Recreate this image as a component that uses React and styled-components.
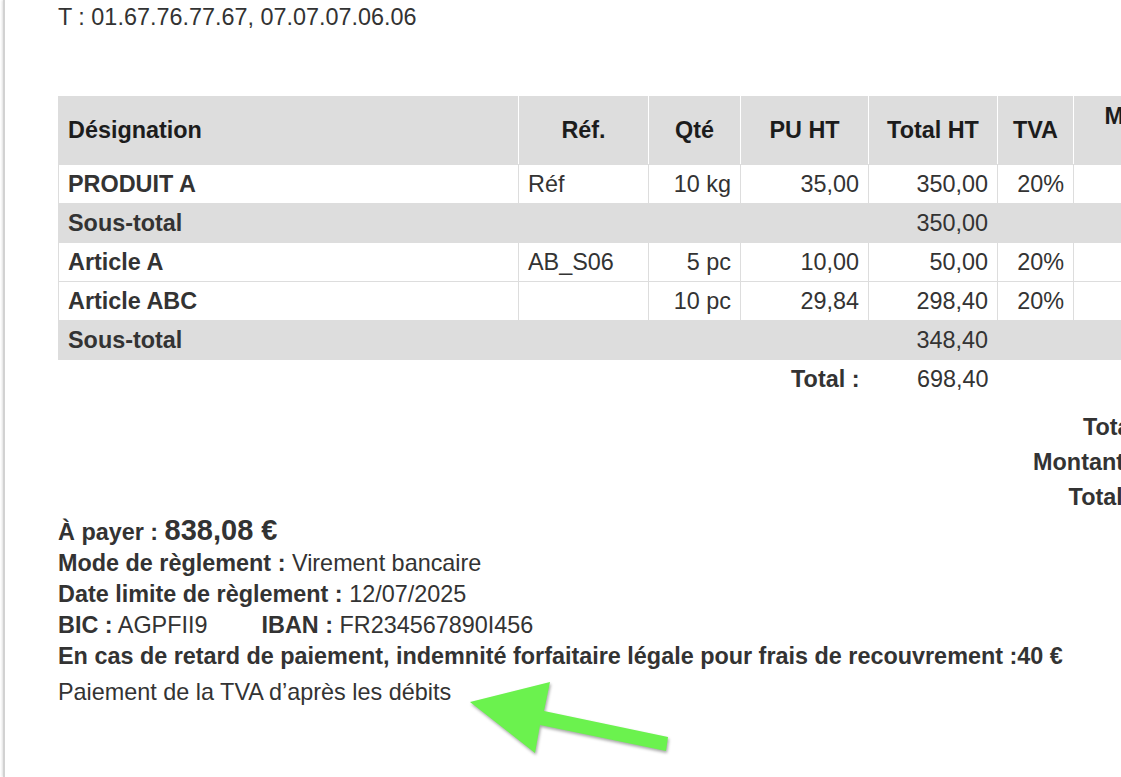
import React from 'react';
import styled, { createGlobalStyle } from 'styled-components';

const GlobalStyle = createGlobalStyle`
  html, body {
    margin: 0;
    padding: 0;
    background: #fff;
    overflow: hidden;
  }
  body {
    font-family: "Liberation Sans", Arial, Helvetica, sans-serif;
    font-size: 23.4px;
    color: #333;
  }
`;

const Viewport = styled.div`
  position: relative;
  width: 100vw;
  height: 100vh;
  overflow: hidden;
`;

const Page = styled.div`
  display: flow-root;
  margin-left: 3px;
  width: 1400px;
  min-height: 100vh;
  padding-left: 53px;
  border-left: 2px solid #d2d2d2;
  box-shadow: -1px 0 2px rgba(0, 0, 0, 0.12);
  box-sizing: border-box;
`;

const Contact = styled.div`
  margin-top: -29px;
  line-height: 31px;
`;

const Table = styled.table`
  margin-top: 63px;
  border-collapse: collapse;
  table-layout: fixed;
  width: 1168px;
  line-height: 28px;
`;

const Th = styled.th`
  box-sizing: border-box;
  width: ${({ $w }) => $w}px;
  padding: 6px 9px;
  background: #ddd;
  color: #1c1c1c;
  font-weight: bold;
  text-align: ${({ $align }) => $align || 'center'};
  vertical-align: middle;
  white-space: nowrap;
  border-left: 1px solid #fff;
  border-right: 1px solid #fff;
  border-bottom: 1px solid #ddd;
  &:first-child {
    border-left: 1px solid #ddd;
  }
`;

const Td = styled.td`
  padding: 5px 9px;
  border: 1px solid #ddd;
  text-align: ${({ $align }) => $align || 'left'};
  font-weight: ${({ $bold }) => ($bold ? 'bold' : 'normal')};
  white-space: nowrap;
  overflow: hidden;
`;

const SubRow = styled.tr`
  background: #ddd;
  td {
    border-color: #ddd;
  }
`;

const TotalCell = styled.td`
  padding: 5px 9px;
  text-align: right;
  font-weight: ${({ $bold }) => ($bold ? 'bold' : 'normal')};
`;

const Totals = styled.div`
  display: grid;
  grid-template-columns: 200px 169px;
  width: 369px;
  margin: 12px 39px 0 auto;
  line-height: 29px;
`;

const TotalLabel = styled.div`
  padding: 3px 6px 3px 0;
  text-align: right;
  font-weight: bold;
  white-space: nowrap;
`;

const TotalValue = styled.div`
  padding: 3px 0 3px 10px;
  text-align: right;
`;

const Payment = styled.div`
  line-height: 31px;
`;

const Line = styled.div`
  white-space: nowrap;
`;

const Label = styled.b`
  font-weight: bold;
`;

const Amount = styled.span`
  font-size: 29px;
  font-weight: bold;
`;

const Iban = styled.span`
  margin-left: 54px;
`;

const Note = styled.p`
  margin: 5px 0 0;
  line-height: 31px;
`;

const Arrow = styled.svg`
  position: absolute;
  left: 460px;
  top: 670px;
  width: 220px;
  height: 100px;
  overflow: visible;
  filter: drop-shadow(1px 2px 1.5px rgba(0, 0, 0, 0.35));
`;

const columns = [
  { label: 'Désignation', w: 460, align: 'left' },
  { label: 'Réf.', w: 130 },
  { label: 'Qté', w: 92 },
  { label: 'PU HT', w: 128 },
  { label: 'Total HT', w: 129 },
  { label: 'TVA', w: 76 },
  { label: <>Montant<br />TTC</>, w: 153 },
];

const rows = [
  { name: 'PRODUIT A', ref: 'Réf', qty: '10 kg', pu: '35,00', total: '350,00', tva: '20%' },
  { sub: '350,00' },
  { name: 'Article A', ref: 'AB_S06', qty: '5 pc', pu: '10,00', total: '50,00', tva: '20%' },
  { name: 'Article ABC', ref: '', qty: '10 pc', pu: '29,84', total: '298,40', tva: '20%' },
  { sub: '348,40' },
];

const totals = [
  ['Total HT :', '698,40 €'],
  ['Montant TVA :', '139,68 €'],
  ['Total TTC :', '838,08 €'],
];

const App = () => {
  return (
    <Viewport>
      <GlobalStyle />
      <Page>
        <Contact>
          <Line>E : contact@entreprise-exemple.fr, www.entreprise-exemple.fr, SIRET : 123 456 789 00012, APE : 4791</Line>
          <Line>T : 01.67.76.77.67, 07.07.07.06.06</Line>
        </Contact>

        <Table>
          <thead>
            <tr>
              {columns.map((c, i) => (
                <Th key={i} $w={c.w} $align={c.align}>{c.label}</Th>
              ))}
            </tr>
          </thead>
          <tbody>
            {rows.map((r, i) =>
              r.sub ? (
                <SubRow key={i}>
                  <Td colSpan={4} $bold>Sous-total</Td>
                  <Td $align="right">{r.sub}</Td>
                  <Td colSpan={2}></Td>
                </SubRow>
              ) : (
                <tr key={i}>
                  <Td $bold>{r.name}</Td>
                  <Td>{r.ref}</Td>
                  <Td $align="right">{r.qty}</Td>
                  <Td $align="right">{r.pu}</Td>
                  <Td $align="right">{r.total}</Td>
                  <Td $align="right">{r.tva}</Td>
                  <Td></Td>
                </tr>
              )
            )}
            <tr>
              <TotalCell colSpan={4} $bold>Total :</TotalCell>
              <TotalCell>698,40</TotalCell>
              <TotalCell colSpan={2}></TotalCell>
            </tr>
          </tbody>
        </Table>

        <Totals>
          {totals.map(([label, value]) => (
            <React.Fragment key={label}>
              <TotalLabel>{label}</TotalLabel>
              <TotalValue>{value}</TotalValue>
            </React.Fragment>
          ))}
        </Totals>

        <Payment>
          <Line><Label>À payer : </Label><Amount>838,08 €</Amount></Line>
          <Line><Label>Mode de règlement :</Label> Virement bancaire</Line>
          <Line><Label>Date limite de règlement :</Label> 12/07/2025</Line>
          <Line>
            <Label>BIC :</Label> AGPFII9
            <Iban><Label>IBAN :</Label> FR234567890I456</Iban>
          </Line>
          <Line><Label>En cas de retard de paiement, indemnité forfaitaire légale pour frais de recouvrement :40 €</Label></Line>
        </Payment>
        <Note>Paiement de la TVA d’après les débits</Note>
      </Page>

      <Arrow viewBox="0 0 220 100">
        <polygon
          points="10,32 90,12 84,41 208,67 206,81 80,55 75,83"
          fill="#6bf24e"
        />
      </Arrow>
    </Viewport>
  );
};

export default App;
